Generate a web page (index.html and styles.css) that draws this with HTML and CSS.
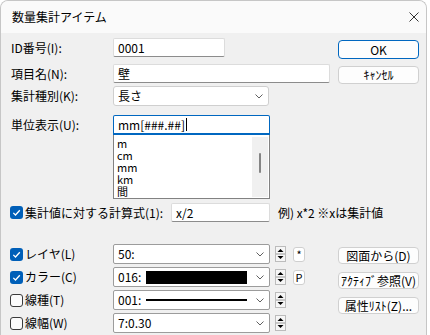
FILE: index.html
```html
<!DOCTYPE html>
<html lang="ja">
<head>
<meta charset="utf-8">
<link rel="stylesheet" href="styles.css">
</head>
<body>
<div class="window">
  <div class="titlebar">
    <span class="title">数量集計アイテム</span>
    <svg class="close" width="10" height="10" viewBox="0 0 10 10"><path d="M0.5 0.5 L9.5 9.5 M9.5 0.5 L0.5 9.5" stroke="#333" stroke-width="1" fill="none"/></svg>
  </div>
  <div class="content">
    <div class="top">
      <div class="form">
        <div class="row r-id"><span class="label">ID番号(I):</span><div class="textbox w-id">0001</div></div>
        <div class="row r-name"><span class="label">項目名(N):</span><div class="textbox w-name">壁</div></div>
        <div class="row r-kind"><span class="label">集計種別(K):</span><div class="combo light w-kind"><span class="ctext">長さ</span><svg class="arrow" width="8" height="5" viewBox="0 0 8 5"><polyline points="0.5,0.5 4,4 7.5,0.5" fill="none" stroke="#606060"/></svg></div></div>
        <div class="row r-unit">
          <span class="label unit-label">単位表示(U):</span>
          <div class="unitbox">
            <div class="focusbox">mm[###.##]<span class="caret"></span></div>
            <div class="listbox">
              <ul class="items">
                <li>m</li>
                <li>cm</li>
                <li>mm</li>
                <li>km</li>
                <li>間</li>
              </ul>
              <div class="vscroll"><div class="thumb"></div></div>
            </div>
          </div>
        </div>
      </div>
      <div class="side side-top">
        <div class="btn default h19">OK</div>
        <div class="btn h18">ｷｬﾝｾﾙ</div>
      </div>
    </div>

    <div class="formula">
      <svg class="cb" width="13" height="13" viewBox="0 0 13 13"><rect x="0" y="0" width="13" height="13" rx="3" fill="#005fb8"/><path d="M3.3 6.9 L5.5 9 L9.8 4.3" stroke="#fff" stroke-width="1.3" fill="none"/></svg>
      <span class="flabel">集計値に対する計算式(1):</span>
      <div class="textbox w-formula">x/2</div>
      <span class="example">例) x*2 ※xは集計値</span>
    </div>

    <div class="bottom">
      <div class="attrs">
        <div class="arow">
          <div class="check">
            <svg class="cb" width="13" height="13" viewBox="0 0 13 13"><rect x="0" y="0" width="13" height="13" rx="3" fill="#005fb8"/><path d="M3.3 6.9 L5.5 9 L9.8 4.3" stroke="#fff" stroke-width="1.3" fill="none"/></svg>
            <span class="clabel">レイヤ(L)</span>
          </div>
          <div class="combo dark w-attr"><span class="ctext">50:</span><svg class="arrow" width="8" height="5" viewBox="0 0 8 5"><polyline points="0.5,0.5 4,4 7.5,0.5" fill="none" stroke="#606060"/></svg></div>
          <svg class="spin" width="11" height="16" viewBox="0 0 11 16"><rect x="0.5" y="0.5" width="10" height="15" fill="#f6f6f6" stroke="#bcbcbc"/><line x1="1" y1="8" x2="10" y2="8" stroke="#9a9a9a"/><polygon points="2.5,6 8.5,6 5.5,3" fill="#000"/><polygon points="2.5,10 8.5,10 5.5,13" fill="#000"/></svg>
          <div class="mini">*</div>
        </div>
        <div class="arow">
          <div class="check">
            <svg class="cb" width="13" height="13" viewBox="0 0 13 13"><rect x="0" y="0" width="13" height="13" rx="3" fill="#005fb8"/><path d="M3.3 6.9 L5.5 9 L9.8 4.3" stroke="#fff" stroke-width="1.3" fill="none"/></svg>
            <span class="clabel">カラー(C)</span>
          </div>
          <div class="combo dark w-attr"><span class="ctext code">016:</span><span class="swatch"></span><svg class="arrow" width="8" height="5" viewBox="0 0 8 5"><polyline points="0.5,0.5 4,4 7.5,0.5" fill="none" stroke="#606060"/></svg></div>
          <svg class="spin" width="11" height="16" viewBox="0 0 11 16"><rect x="0.5" y="0.5" width="10" height="15" fill="#f6f6f6" stroke="#bcbcbc"/><line x1="1" y1="8" x2="10" y2="8" stroke="#9a9a9a"/><polygon points="2.5,6 8.5,6 5.5,3" fill="#000"/><polygon points="2.5,10 8.5,10 5.5,13" fill="#000"/></svg>
          <div class="mini">P</div>
        </div>
        <div class="arow">
          <div class="check">
            <svg class="cb" width="13" height="13" viewBox="0 0 13 13"><rect x="0.5" y="0.5" width="12" height="12" rx="2.5" fill="#fbfbfb" stroke="#3a3a3a"/></svg>
            <span class="clabel">線種(T)</span>
          </div>
          <div class="combo dark w-attr"><span class="ctext code">001:</span><span class="linesample"></span><svg class="arrow" width="8" height="5" viewBox="0 0 8 5"><polyline points="0.5,0.5 4,4 7.5,0.5" fill="none" stroke="#606060"/></svg></div>
          <svg class="spin" width="11" height="16" viewBox="0 0 11 16"><rect x="0.5" y="0.5" width="10" height="15" fill="#f6f6f6" stroke="#bcbcbc"/><line x1="1" y1="8" x2="10" y2="8" stroke="#9a9a9a"/><polygon points="2.5,6 8.5,6 5.5,3" fill="#000"/><polygon points="2.5,10 8.5,10 5.5,13" fill="#000"/></svg>
        </div>
        <div class="arow">
          <div class="check">
            <svg class="cb" width="13" height="13" viewBox="0 0 13 13"><rect x="0.5" y="0.5" width="12" height="12" rx="2.5" fill="#fbfbfb" stroke="#3a3a3a"/></svg>
            <span class="clabel">線幅(W)</span>
          </div>
          <div class="combo dark w-attr"><span class="ctext">7:0.30</span><svg class="arrow" width="8" height="5" viewBox="0 0 8 5"><polyline points="0.5,0.5 4,4 7.5,0.5" fill="none" stroke="#606060"/></svg></div>
          <svg class="spin" width="11" height="16" viewBox="0 0 11 16"><rect x="0.5" y="0.5" width="10" height="15" fill="#f6f6f6" stroke="#bcbcbc"/><line x1="1" y1="8" x2="10" y2="8" stroke="#9a9a9a"/><polygon points="2.5,6 8.5,6 5.5,3" fill="#000"/><polygon points="2.5,10 8.5,10 5.5,13" fill="#000"/></svg>
        </div>
      </div>
      <div class="side side-bottom">
        <div class="btn h17">図面から(D)</div>
        <div class="btn h17">ｱｸﾃｨﾌﾞ参照(V)</div>
        <div class="btn h17">属性ﾘｽﾄ(Z)...</div>
      </div>
    </div>
  </div>
</div>
</body>
</html>
```

FILE: styles.css
```css
* { box-sizing: border-box; }
html, body { margin: 0; padding: 0; background: #ffffff; }
body {
  width: 430px;
  height: 335px;
  overflow: hidden;
  font-family: "Noto Sans CJK JP", "Noto Sans", sans-serif;
  font-size: 12px;
  line-height: 16px;
  color: #000;
}
.window {
  width: 427px;
  height: 335px;
  border: 1px solid #c6c6c6;
  border-bottom: none;
  border-radius: 8px 8px 0 0;
  background: #f0f0f0;
  overflow: hidden;
}
.titlebar {
  height: 32px;
  background: #fafafa;
  display: flex;
  align-items: center;
  padding: 0 7px 0 11px;
}
.title { flex: 1; font-size: 12px; line-height: 16px; }
.close { display: block; }
.content { padding: 0 7px 0 10px; }
.top, .bottom { display: grid; grid-template-columns: 327px 81px; }
.row { display: flex; align-items: center; }
.label { width: 102px; flex: none; }
.r-id { margin-top: 5px; }
.r-name { margin-top: 7px; }
.r-kind { margin-top: 3px; }
.r-unit { margin-top: 9px; align-items: flex-start; }
.unit-label { line-height: 20px; }

.textbox {
  height: 19px;
  background: #fff;
  border: 1px solid #dcdcdc;
  border-bottom-color: #8c8c8c;
  border-radius: 2px;
  padding: 0 4px;
  line-height: 17px;
}
.w-id { width: 112px; }
.w-name { width: 217px; }
.w-formula { width: 99px; }

.combo {
  height: 20px;
  background: #fff;
  border: 1px solid #cfcfcf;
  border-radius: 3px;
  display: flex;
  align-items: center;
  padding: 0 5px 0 4px;
}
.combo.dark { border-color: #9c9c9c; border-radius: 2px; }
.ctext { flex: 1; line-height: 18px; }
.ctext.code { flex: none; width: 28px; }
.arrow { display: block; flex: none; }
.w-kind { width: 156px; }
.w-attr { width: 157px; }
.swatch { display: block; width: 105px; height: 13px; background: #000; margin-right: 9px; }
.linesample { display: block; width: 105px; height: 2px; background: #000; margin-right: 9px; }

.unitbox { width: 157px; }
.focusbox {
  height: 20px;
  background: #fff;
  border: 1px solid #0067c0;
  border-bottom-width: 2px;
  border-radius: 2px 2px 0 0;
  padding: 0 4px;
  line-height: 17px;
  display: flex;
  align-items: center;
}
.caret { display: block; width: 1px; height: 13px; background: #000; margin-left: 1px; }
.listbox {
  height: 64px;
  background: #fff;
  border: 1px solid #828282;
  border-top: none;
  display: flex;
  padding: 2px 1px 1px 3px;
}
.items { list-style: none; margin: 0; padding: 0; flex: 1; }
.items li { line-height: 12px; height: 12px; font-size: 11px; }
.vscroll {
  width: 16px;
  height: 60px;
  background: #f0f0f0;
  display: flex;
  justify-content: center;
  padding-top: 16px;
}
.thumb { width: 2px; height: 20px; background: #858585; border-radius: 1px; }

.side { display: flex; flex-direction: column; }
.side-top { padding-top: 7px; gap: 7px; }
.side-bottom { padding-top: 3px; gap: 8px; }
.btn {
  width: 81px;
  background: #fdfdfd;
  border: 1px solid #d0d0d0;
  border-radius: 4px;
  text-align: center;
  display: flex;
  align-items: center;
  justify-content: center;
}
.btn.default { border-color: #0067c0; }
.h19 { height: 19px; }
.h18 { height: 18px; }
.h17 { height: 17px; }

.formula { display: flex; align-items: center; margin-top: 4px; height: 19px; }
.cb { display: block; flex: none; margin-left: -1px; }
.flabel { width: 146px; margin-left: 2px; flex: none; }
.example { margin-left: 8px; }

.bottom { margin-top: 22px; }
.attrs { display: flex; flex-direction: column; gap: 3px; }
.arow { display: flex; align-items: center; height: 20px; }
.check { width: 102px; flex: none; display: flex; align-items: center; }
.clabel { margin-left: 2px; }
.spin { display: block; flex: none; margin-left: 5px; }
.mini {
  width: 12px;
  height: 15px;
  margin-left: 7px;
  background: #fff;
  border: 1px solid #cfcfcf;
  border-radius: 3px;
  font-size: 11px;
  line-height: 13px;
  text-align: center;
}
```
